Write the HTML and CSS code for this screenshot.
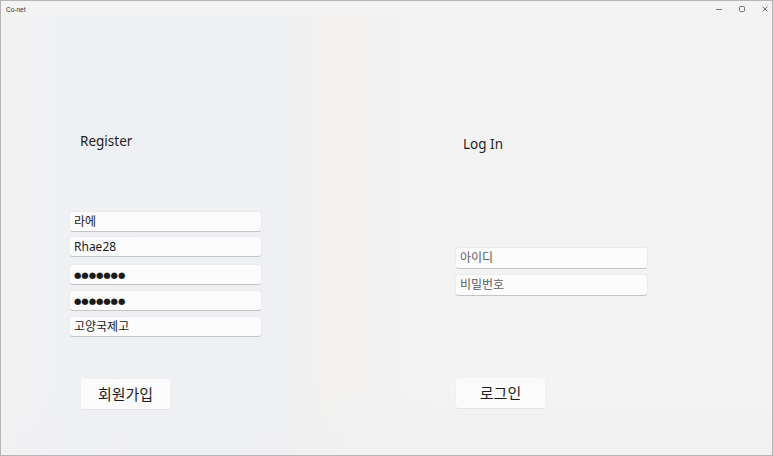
FILE: index.html
```html
<!DOCTYPE html>
<html lang="ko">
<head>
<meta charset="utf-8">
<title>Co-net</title>
<link rel="stylesheet" href="styles.css">
</head>
<body>
<div class="window">
  <header class="titlebar">
    <span class="title">Co-net</span>
    <div class="controls">
      <span class="ctl">
        <svg width="8" height="8" viewBox="0 0 8 8"><path d="M1 4.5h6" stroke="#555" stroke-width="0.8"/></svg>
      </span>
      <span class="ctl">
        <svg width="8" height="8" viewBox="0 0 8 8"><rect x="1.5" y="1.5" width="5" height="5" rx="1" fill="none" stroke="#555" stroke-width="0.8"/></svg>
      </span>
      <span class="ctl">
        <svg width="8" height="8" viewBox="0 0 8 8"><path d="M1.5 1.5l5 5M6.5 1.5l-5 5" stroke="#555" stroke-width="0.8"/></svg>
      </span>
    </div>
  </header>
  <main class="content">
    <section class="panel register">
      <h2 class="heading reg-heading">Register</h2>
      <div class="fields reg-fields">
        <div class="field f1">라에</div>
        <div class="field f2">Rhae28</div>
        <div class="field f3 dots">●●●●●●●</div>
        <div class="field f4 dots">●●●●●●●</div>
        <div class="field f5">고양국제고</div>
      </div>
      <button class="btn reg-btn">회원가입</button>
    </section>
    <section class="panel login">
      <h2 class="heading login-heading">Log In</h2>
      <div class="fields login-fields">
        <div class="field placeholder">아이디</div>
        <div class="field placeholder">비밀번호</div>
      </div>
      <button class="btn login-btn">로그인</button>
    </section>
  </main>
</div>
</body>
</html>
```

FILE: styles.css
```css
* { box-sizing: border-box; }
html, body { margin: 0; padding: 0; }
body {
  width: 773px;
  height: 456px;
  overflow: hidden;
  font-family: "Noto Sans", "Noto Sans CJK KR", sans-serif;
  color: #1b1b1b;
  background: #f3f3f3;
}
.window {
  width: 773px;
  height: 456px;
  border: 1px solid #b5b5b5;
  display: flex;
  flex-direction: column;
  background:
    linear-gradient(180deg, rgba(243,243,243,0) 85%, rgba(240,240,242,0.5) 100%),
    linear-gradient(90deg, #f2f2f2 0%, #f0f1f3 6%, #eef0f4 18%, #eef0f4 30%, #eff0f3 37%, #f2f1ef 41%, #f3f2f1 46%, #f3f3f3 56%, #f3f3f3 100%);
}
.titlebar {
  height: 15px;
  flex: none;
  display: flex;
  align-items: center;
  justify-content: space-between;
  background: #f3f3f3;
}
.title {
  font-family: "Liberation Sans", sans-serif;
  font-size: 6.5px;
  color: #333;
  padding-left: 5px;
  padding-top: 1px;
}
.controls {
  display: flex;
  align-items: center;
  height: 100%;
  padding-right: 3px;
  gap: 15px;
}
.ctl { width: 8px; height: 8px; display: flex; }
.content {
  flex: 1;
  display: grid;
  grid-template-columns: 386px 1fr;
}
.panel {
  display: flex;
  flex-direction: column;
  align-items: flex-start;
  padding-left: 68px;
}
.heading {
  margin: 0;
  font-weight: 400;
  font-size: 13.5px;
  line-height: 20px;
  color: #1f1f1f;
}
.reg-heading { margin-top: 115px; margin-left: 11px; margin-bottom: -1px; }
.login-heading { margin-top: 118px; margin-left: 8px; margin-bottom: -1px; }
.fields {
  display: flex;
  flex-direction: column;
  width: 193px;
}
.reg-fields { margin-top: 61px; }
.login-fields { margin-top: 94px; gap: 5px; }
.login-fields .field { height: 22px; }
.field {
  height: 21px;
  background: #fcfcfc;
  border: 1px solid #ebebeb;
  border-bottom: 1px solid #c4c4c4;
  border-radius: 4px;
  padding-left: 4px;
  font-family: "Noto Sans", "Noto Sans CJK KR", sans-serif;
  font-size: 12px;
  line-height: 19px;
  color: #1a1a1a;
  white-space: nowrap;
}
.f2 { margin-top: 4px; }
.f3 { margin-top: 7px; }
.f4 { margin-top: 5px; }
.f5 { margin-top: 5px; }
.dots {
  font-family: "DejaVu Sans", sans-serif;
  font-size: 8.5px;
  letter-spacing: -0.1px;
  line-height: 20px;
}
.placeholder { color: #5c5c5c; }
.btn {
  width: 91px;
  height: 32px;
  background: #fbfbfb;
  border: 1px solid #f0f0f0;
  border-bottom-color: #e4e4e4;
  border-radius: 4px;
  font-family: "Noto Sans CJK KR", sans-serif;
  font-size: 15px;
  color: #1b1b1b;
  padding: 0 0 2px 0;
}
.reg-btn { margin-top: 41px; margin-left: 11px; }
.login-btn { margin-top: 81px; }
```
